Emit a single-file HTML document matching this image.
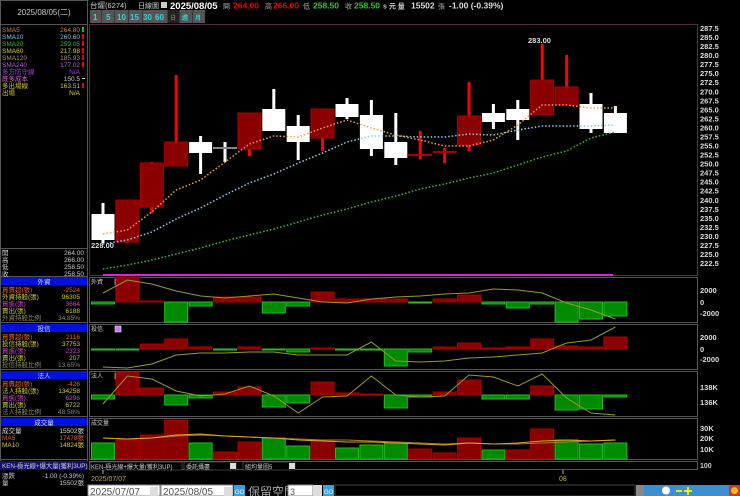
<!DOCTYPE html>
<html><head><meta charset="utf-8">
<style>
html,body{margin:0;padding:0;background:#000;width:740px;height:496px;overflow:hidden}
svg{display:block}
text{font-family:"Liberation Sans","Noto Sans CJK TC",sans-serif}
</style></head><body>
<svg id="s" width="740" height="496" xmlns="http://www.w3.org/2000/svg">
<rect width="740" height="496" fill="#000"/>
<rect x="0.5" y="0.5" width="87" height="469" fill="none" stroke="#555"/>
<line x1="0" y1="24.5" x2="88" y2="24.5" stroke="#555"/>
<line x1="0" y1="248.5" x2="88" y2="248.5" stroke="#555"/>
<line x1="0" y1="276.5" x2="88" y2="276.5" stroke="#555"/>
<line x1="0" y1="322.5" x2="88" y2="322.5" stroke="#555"/>
<line x1="0" y1="369.5" x2="88" y2="369.5" stroke="#555"/>
<line x1="0" y1="416.5" x2="88" y2="416.5" stroke="#555"/>
<line x1="0" y1="459.5" x2="88" y2="459.5" stroke="#555"/>
<text x="44" y="15" fill="#ccc" font-size="8" text-anchor="middle">2025/08/05(二)</text>
<g font-size="6.5">
<text x="2" y="32" fill="#d08030">SMA5</text><text x="80" y="32" fill="#d08030" text-anchor="end">264.80</text>
<text x="2" y="39" fill="#80c0e0">SMA10</text><text x="80" y="39" fill="#80c0e0" text-anchor="end">260.60</text>
<text x="2" y="46" fill="#20c020">SMA20</text><text x="80" y="46" fill="#20c020" text-anchor="end">259.05</text>
<text x="2" y="53" fill="#d0d020">SMA60</text><text x="80" y="53" fill="#d0d020" text-anchor="end">217.98</text>
<text x="2" y="60" fill="#b09070">SMA120</text><text x="80" y="60" fill="#b09070" text-anchor="end">185.93</text>
<text x="2" y="67" fill="#b060d0">SMA240</text><text x="80" y="67" fill="#b060d0" text-anchor="end">177.02</text>
<text x="2" y="74" fill="#a040e0">多方防守線</text><text x="80" y="74" fill="#a040e0" text-anchor="end">N/A</text>
<text x="2" y="81" fill="#d060d0">既多成本</text><text x="80" y="81" fill="#ccc" text-anchor="end">150.5</text>
<text x="2" y="88" fill="#d0d020">多出場線</text><text x="80" y="88" fill="#d0d020" text-anchor="end">163.51</text>
<text x="2" y="95" fill="#d0d020">出場</text><text x="80" y="95" fill="#d0d020" text-anchor="end">N/A</text>
</g>
<g>
<rect x="82" y="27" width="2" height="5" fill="#0c0"/>
<rect x="82" y="34" width="2" height="5" fill="#e00"/><rect x="82" y="41" width="2" height="5" fill="#e00"/>
<rect x="82" y="48" width="2" height="5" fill="#e00"/><rect x="82" y="55" width="2" height="5" fill="#e00"/>
<rect x="82" y="62" width="2" height="5" fill="#e00"/><rect x="82" y="78" width="3" height="1" fill="#ccc"/>
<rect x="82" y="83" width="2" height="5" fill="#e00"/>
</g>
<g font-size="6.5" fill="#ccc">
<text x="2" y="255">開</text><text x="84" y="255" text-anchor="end">264.00</text>
<text x="2" y="262">高</text><text x="84" y="262" text-anchor="end">266.00</text>
<text x="2" y="269">低</text><text x="84" y="269" text-anchor="end">258.50</text>
<text x="2" y="276">收</text><text x="84" y="276" text-anchor="end">258.50</text>
</g>
<g font-size="6.5">
<rect x="1" y="277" width="86" height="8" fill="#0010e0"/><text x="44" y="284" fill="#ddd" text-anchor="middle">外資</text>
<text x="2" y="292" fill="#e06020">買賣超(張)</text><text x="80" y="292" fill="#e06020" text-anchor="end">-2524</text>
<text x="2" y="299" fill="#d0d020">外資持股(張)</text><text x="80" y="299" fill="#d0d020" text-anchor="end">96305</text>
<text x="2" y="306" fill="#d040d0">買進(張)</text><text x="80" y="306" fill="#d040d0" text-anchor="end">3664</text>
<text x="2" y="313" fill="#c0d020">賣出(張)</text><text x="80" y="313" fill="#c0d020" text-anchor="end">6188</text>
<text x="2" y="320" fill="#8a8a60">外資持股比例</text><text x="80" y="320" fill="#8a8a60" text-anchor="end">34.85%</text>
<rect x="1" y="324" width="86" height="8" fill="#0010e0"/><text x="44" y="331" fill="#ddd" text-anchor="middle">投信</text>
<text x="2" y="339" fill="#e06020">買賣超(張)</text><text x="80" y="339" fill="#e06020" text-anchor="end">2116</text>
<text x="2" y="346" fill="#d0d020">投信持股(張)</text><text x="80" y="346" fill="#d0d020" text-anchor="end">37753</text>
<text x="2" y="353" fill="#d040d0">買進(張)</text><text x="80" y="353" fill="#d040d0" text-anchor="end">2323</text>
<text x="2" y="360" fill="#c0d020">賣出(張)</text><text x="80" y="360" fill="#c0d020" text-anchor="end">207</text>
<text x="2" y="367" fill="#8a8a60">投信持股比例</text><text x="80" y="367" fill="#8a8a60" text-anchor="end">13.65%</text>
<rect x="1" y="371" width="86" height="8" fill="#0010e0"/><text x="44" y="378" fill="#ddd" text-anchor="middle">法人</text>
<text x="2" y="386" fill="#e06020">買賣超(張)</text><text x="80" y="386" fill="#e06020" text-anchor="end">-426</text>
<text x="2" y="393" fill="#d0d020">法人持股(張)</text><text x="80" y="393" fill="#d0d020" text-anchor="end">134258</text>
<text x="2" y="400" fill="#d040d0">買進(張)</text><text x="80" y="400" fill="#d040d0" text-anchor="end">6296</text>
<text x="2" y="407" fill="#c0d020">賣出(張)</text><text x="80" y="407" fill="#c0d020" text-anchor="end">6722</text>
<text x="2" y="414" fill="#8a8a60">法人持股比例</text><text x="80" y="414" fill="#8a8a60" text-anchor="end">48.58%</text>
<rect x="1" y="418" width="86" height="8" fill="#0010e0"/><text x="44" y="425" fill="#ddd" text-anchor="middle">成交量</text>
<text x="2" y="433" fill="#ddd">成交量</text><text x="84" y="433" fill="#ddd" text-anchor="end">15502張</text>
<text x="2" y="440" fill="#e06020">MA5</text><text x="84" y="440" fill="#e06020" text-anchor="end">17478張</text>
<text x="2" y="447" fill="#d0d020">MA10</text><text x="84" y="447" fill="#d0d020" text-anchor="end">14824張</text>
<rect x="0" y="461" width="88" height="9" fill="#10106a"/><text x="2" y="468" fill="#ccd" font-size="6.3">KEN-極光線+爆大量(獲利3UP)</text>
<text x="2" y="478" fill="#ccc">漲跌</text><text x="84" y="478" fill="#ccc" text-anchor="end">-1.00 (-0.39%)</text>
<text x="2" y="485" fill="#ccc">量</text><text x="84" y="485" fill="#ccc" text-anchor="end">15502張</text>
</g>
<!-- header -->
<text x="90" y="8" fill="#ccc" font-size="7.5">台燿(6274)</text>
<text x="138" y="8" fill="#ccc" font-size="7">日線圖</text>
<rect x="161" y="2" width="6" height="6" fill="#ccc"/>
<text x="170" y="9" fill="#fff" font-size="9.5" font-weight="bold">2025/08/05</text>
<g font-size="8.5" font-weight="bold">
<text x="223" y="8.5" fill="#aaa" font-weight="normal" font-size="7">開</text><text x="233" y="8.5" fill="#e00">264.00</text>
<text x="265" y="8.5" fill="#aaa" font-weight="normal" font-size="7">高</text><text x="273" y="8.5" fill="#e00">266.00</text>
<text x="303" y="8.5" fill="#aaa" font-weight="normal" font-size="7">低</text><text x="313" y="8.5" fill="#2c2">258.50</text>
<text x="345" y="8.5" fill="#aaa" font-weight="normal" font-size="7">收</text><text x="354" y="8.5" fill="#2c2">258.50</text>
<text x="383" y="8.5" fill="#ccc" font-size="7">s 元 量</text><text x="411" y="8.5" fill="#ddd">15502</text>
<text x="438" y="8.5" fill="#aaa" font-weight="normal" font-size="7">張</text><text x="449" y="8.5" fill="#ddd">-1.00 (-0.39%)</text>
</g>
<rect x="90" y="10" width="115" height="13" fill="#3a3a3a"/>
<g font-size="8" fill="#40d0d0" font-weight="bold">
<rect x="90" y="10" width="11" height="13" fill="#555"/><text x="93" y="20">1</text>
<rect x="102" y="10" width="12" height="13" fill="#555"/><text x="106" y="20">5</text>
<rect x="115" y="10" width="13" height="13" fill="#555"/><text x="117" y="20">10</text>
<rect x="129" y="10" width="13" height="13" fill="#555"/><text x="130" y="20">15</text>
<rect x="143" y="10" width="12" height="13" fill="#555"/><text x="143" y="20">30</text>
<rect x="155" y="10" width="12" height="13" fill="#555"/><text x="155" y="20">60</text>
<rect x="168" y="10" width="11" height="13" fill="#222"/><text x="170" y="20" fill="#666" font-size="6">日</text>
<rect x="180" y="10" width="12" height="13" fill="#555"/><text x="182" y="20" font-size="6">週</text>
<rect x="193" y="10" width="12" height="13" fill="#555"/><text x="195" y="20" font-size="6">月</text>
</g>
<g fill="none" stroke="#553040">
<rect x="89.5" y="24.5" width="608" height="251"/>
</g>
<g fill="none" stroke="#555">
<rect x="89.5" y="277.5" width="608" height="45"/>
<rect x="89.5" y="324.5" width="608" height="45"/>
<rect x="89.5" y="371.5" width="608" height="45"/>
<rect x="89.5" y="418.5" width="608" height="41"/>
<rect x="89.5" y="461.5" width="608" height="8"/>
</g>
<line x1="103" y1="275" x2="613" y2="275" stroke="#e020e0" stroke-width="2"/>
<text x="700" y="468" fill="#ccc" font-size="7" font-weight="bold">100</text>
<g font-size="6" fill="#ccc">
<text x="91" y="284">外資</text><text x="91" y="331">投信</text><text x="91" y="378">法人</text><text x="91" y="425">成交量</text>
</g>
<rect x="115" y="279" width="6" height="6" fill="#c080f0" stroke="#fff" stroke-width=".5"/>
<rect x="115" y="326" width="6" height="6" fill="#c080f0" stroke="#fff" stroke-width=".5"/>
<rect x="115" y="373" width="6" height="6" fill="#c080f0" stroke="#fff" stroke-width=".5"/>
<g id="dyn"></g>
<g font-size="7.5" fill="#ddd" font-weight="bold" id="ax"></g>
<g font-size="7.5" fill="#ddd" font-weight="bold">
<text x="700" y="293">2000</text><text x="700" y="305">0</text><text x="700" y="316">-2000</text>
<text x="700" y="340">2000</text><text x="700" y="352">0</text><text x="700" y="362">-2000</text>
<text x="700" y="390">138K</text><text x="700" y="405">136K</text>
<text x="700" y="431">30K</text><text x="700" y="441">20K</text><text x="700" y="452">10K</text>
</g>
<text x="528" y="43" fill="#ddd" font-size="7.5" font-weight="bold">283.00</text>
<text x="91" y="248" fill="#ddd" font-size="7.5" font-weight="bold">228.00</text>
<g font-size="6">
<rect x="90" y="462" width="92" height="8" fill="#000" stroke="#777" stroke-width=".5"/><text x="91" y="469" fill="#ccc">KEN-極光線+爆大量(獲利3UP)</text>
<rect x="184" y="462" width="52" height="8" fill="#000" stroke="#777" stroke-width=".5"/><text x="186" y="469" fill="#ccc">委託攝盡</text><rect x="230" y="463" width="6" height="6" fill="#ddd"/>
<rect x="243" y="462" width="52" height="8" fill="#000" stroke="#777" stroke-width=".5"/><text x="245" y="469" fill="#ccc">組均量圖5</text><rect x="289" y="463" width="6" height="6" fill="#ddd"/>
</g>
<line x1="103" y1="470" x2="103" y2="474" stroke="#aaa"/>
<text x="91" y="481" fill="#c0b020" font-size="7">2025/07/07</text>
<line x1="563" y1="470" x2="563" y2="474" stroke="#aaa"/>
<text x="559" y="481" fill="#c0b020" font-size="7">08</text>
<rect x="88" y="485" width="72" height="11" fill="#fff" stroke="#888"/>
<text x="90" y="495" fill="#555" font-size="10">2025/07/07</text>
<rect x="150" y="487" width="8" height="9" fill="#ddd"/>
<text x="162" y="495" fill="#ccc" font-size="9">~</text>
<rect x="161" y="485" width="72" height="11" fill="#fff" stroke="#888"/>
<text x="163" y="495" fill="#555" font-size="10">2025/08/05</text>
<rect x="224" y="487" width="8" height="9" fill="#ddd"/>
<rect x="234" y="485" width="11" height="11" fill="#3aa0e0"/><text x="235" y="494" fill="#fff" font-size="6">GO</text>
<text x="248" y="496" fill="#aaa" font-size="12">保留空間</text>
<rect x="288" y="485" width="25" height="11" fill="#fff" stroke="#888"/><text x="290" y="495" fill="#555" font-size="9">3</text>
<rect x="313" y="485" width="9" height="11" fill="#ddd"/>
<rect x="323" y="485" width="11" height="11" fill="#3aa0e0"/><text x="324" y="494" fill="#fff" font-size="6">GO</text>
<rect x="335" y="485" width="300" height="11" fill="#000" stroke="#444"/>
<rect x="636" y="485" width="8" height="11" fill="#888"/>
<rect x="644" y="485" width="96" height="11" fill="#3a90d0"/>
<circle cx="666" cy="490.5" r="4" fill="#fff"/><rect x="676" y="490" width="6" height="2" fill="#ee0"/>
<rect x="684" y="490" width="8" height="2" fill="#ee0"/><rect x="687" y="487" width="2" height="8" fill="#ee0"/>
<rect x="729" y="485" width="11" height="11" fill="#e03020"/><circle cx="734.5" cy="490.5" r="3.5" fill="#f0c020"/>
</svg>
<script>
var g=document.getElementById('dyn'),h='';
function X(i){return 91+24.4*i;}
function r(x,y,w,hh,f,st){h+='<rect x="'+x+'" y="'+y+'" width="'+w+'" height="'+Math.max(hh,1)+'" fill="'+f+'"'+(st?' stroke="'+st+'" stroke-width="1"':'')+'/>';}
var C=[[214,240,203,243,'w'],[200,242,200,243,'r'],[163,207,162,213,'r'],[142,166,75,166,'r'],[142,153,136,174,'w'],[148,148,142,162,'g'],[113,149,113,156,'r'],[109,131,89,131,'w'],[126,142,115,160,'w'],[109,138,109,151,'r'],[104,117,98,119,'w'],[115,149,100,156,'w'],[142,158,113,165,'w'],[155,155,131,159,'dr'],[152,152,148,163,'dr'],[116,145,82,151,'r'],[113,122,104,129,'w'],[109,120,100,140,'w'],[80,115,44,115,'r'],[87,105,55,105,'r'],[104,129,93,133,'w'],[113,133,106,133,'w']];
C.forEach(function(c,i){var x=X(i),cx=x+12;
 var wc=c[4]=='w'||c[4]=='g'?'#fff':'#f00';
 h+='<rect x="'+(cx-1.5)+'" y="'+c[2]+'" width="3" height="'+(c[3]-c[2])+'" fill="'+wc+'"/>';
 if(c[4]=='w')r(x+.5,c[0],23,c[1]-c[0],'#fff');
 else if(c[4]=='r')r(x+.5,c[0],23,c[1]-c[0],'#8a0000','#b00000');
 else if(c[4]=='g')r(x,c[0]-1,24,2,'#888');
 else r(x,c[0]-1,24,2,'#a00');
});
function pl(pts,col,dash,w){h+='<polyline points="'+pts.map(function(p,i){return (X(i)+12)+','+p}).join(' ')+'" fill="none" stroke="'+col+'" stroke-width="'+(w||1.5)+'"'+(dash?' stroke-dasharray="1.5,2"':'')+'/>';}
pl([269,265,260,254,248,241,235,229,222,215,209,202,196,189,184,178,173,165,157,151,138,132],'#30c030',1,1.5);
pl([244,240,232,219,208,195,183,174,163,153,142,136,136,137,137,134,135,130,126,126,126,125],'#80d0f0',1,1.5);
pl([234,230,212,190,180,162,144,136,137,128,120,128,135,140,146,146,140,125,105,105,108,108],'#f0a040',1,1.5);
function bars(z,vals){vals.forEach(function(v,i){var x=X(i);if(v<0)r(x+.5,z+v,23,-v,'#8a0000','#b00000');else if(v>0)r(x+.5,z,23,v,'#008a00','#20c020');});}
bars(302,[2,-25,-1,20,4,-5,-5,11,4,-10,-3,-3,-3,1,-3,-7,2,6,2,20,17,14]);
pl([293,280,284,291,296,298,296,294,298,302,303,299,297,296,294,293,289,290,293,303,310,319],'#9a9a20',0,1);
bars(349,[1,1,-5,-10,-2,1,-2,1,3,-1,1,1,17,3,-2,-6,-1,-2,-10,-3,-2,-12]);
pl([367,368,364,355,353,353,352,352,355,355,355,342,361,362,361,358,357,355,353,343,340,327],'#9a9a20',0,1);
bars(395,[4,-23,-7,10,3,-3,-8,12,8,-13,-2,-1,13,2,-3,-15,4,4,-9,15,14,2]);
pl([404,376,379,391,396,394,386,396,413,397,396,376,395,397,396,375,377,386,374,398,413,415],'#9a9a20',0,1);
var V=[[443,'g'],[440,'r'],[435,'r'],[420,'r'],[443,'g'],[452,'r'],[442,'r'],[438,'g'],[446,'g'],[440,'r'],[448,'g'],[445,'g'],[443,'g'],[449,'r'],[453,'r'],[438,'r'],[450,'g'],[450,'r'],[429,'r'],[440,'g'],[444,'g'],[443,'g']];
V.forEach(function(v,i){var x=X(i);if(v[1]=='r')r(x+.5,v[0],23,459-v[0],'#8a0000','#b00000');else r(x+.5,v[0],23,459-v[0],'#008a00','#20c020');});
pl([438,439,438,436,435,436,437,438,439,440,440,441,442,443,444,443,444,444,443,442,441,440],'#a08020',0,1);
pl([438,439,438,435,434,436,437,438,440,441,442,442,443,444,445,443,444,443,441,440,441,440],'#e0a020',0,1);
g.innerHTML=h;
var ax='';for(var k=0;k<27;k++){var p=287.5-2.5*k;ax+='<text x="700" y="'+(31+9.04*k)+'">'+p.toFixed(1)+'</text>';}
document.getElementById('ax').innerHTML=ax;
</script>
</body></html>
